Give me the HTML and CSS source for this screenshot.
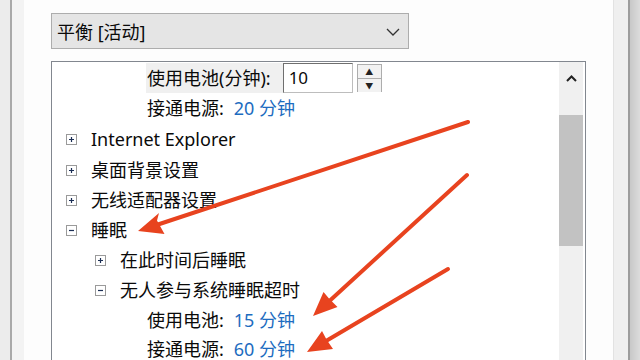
FILE: index.html
```html
<!DOCTYPE html>
<html lang="zh-CN">
<head>
    <meta charset="UTF-8">
    <meta name="viewport" content="width=device-width, initial-scale=1.0">
    <title>电源选项 - 高级设置</title>
    <link rel="stylesheet" href="styles.css">
</head>
<body>

    <div class="window">
        <div class="gutter-left"></div>

        <div class="panel">
            <!-- Plan selector -->
            <div class="plan-select">
                <span>平衡 [活动]</span>
                <svg class="chevron" width="14" height="8" viewBox="0 0 14 8">
                    <polyline points="1,1 7,7 13,1" fill="none" stroke="#333" stroke-width="1.3"/>
                </svg>
            </div>

            <!-- Settings tree -->
            <div class="settings-box">
                <div class="tree">
                    <div class="row row-first leaf">
                        <span class="edit-label">使用电池(分钟):</span>
                        <span class="spin-input">10</span>
                        <span class="spin-buttons">
                            <span class="spin-btn">&#9650;</span>
                            <span class="spin-btn">&#9660;</span>
                        </span>
                    </div>
                    <div class="row leaf">
                        接通电源:<span class="value">20 分钟</span>
                    </div>
                    <div class="row row-tall level-0">
                        <svg class="toggle" width="11" height="11" viewBox="0 0 11 11"><rect x="0.5" y="0.5" width="10" height="10" fill="#fff" stroke="#9a9a9a"/><path d="M3 5.5h5M5.5 3v5" stroke="#1c2f55" stroke-width="1.2"/></svg>
                        <span class="label">Internet Explorer</span>
                    </div>
                    <div class="row level-0">
                        <svg class="toggle" width="11" height="11" viewBox="0 0 11 11"><rect x="0.5" y="0.5" width="10" height="10" fill="#fff" stroke="#9a9a9a"/><path d="M3 5.5h5M5.5 3v5" stroke="#1c2f55" stroke-width="1.2"/></svg>
                        <span class="label">桌面背景设置</span>
                    </div>
                    <div class="row level-0">
                        <svg class="toggle" width="11" height="11" viewBox="0 0 11 11"><rect x="0.5" y="0.5" width="10" height="10" fill="#fff" stroke="#9a9a9a"/><path d="M3 5.5h5M5.5 3v5" stroke="#1c2f55" stroke-width="1.2"/></svg>
                        <span class="label">无线适配器设置</span>
                    </div>
                    <div class="row level-0">
                        <svg class="toggle" width="11" height="11" viewBox="0 0 11 11"><rect x="0.5" y="0.5" width="10" height="10" fill="#fff" stroke="#9a9a9a"/><path d="M3 5.5h5" stroke="#1c2f55" stroke-width="1.2"/></svg>
                        <span class="label">睡眠</span>
                    </div>
                    <div class="row level-1">
                        <svg class="toggle" width="11" height="11" viewBox="0 0 11 11"><rect x="0.5" y="0.5" width="10" height="10" fill="#fff" stroke="#9a9a9a"/><path d="M3 5.5h5M5.5 3v5" stroke="#1c2f55" stroke-width="1.2"/></svg>
                        <span class="label">在此时间后睡眠</span>
                    </div>
                    <div class="row level-1">
                        <svg class="toggle" width="11" height="11" viewBox="0 0 11 11"><rect x="0.5" y="0.5" width="10" height="10" fill="#fff" stroke="#9a9a9a"/><path d="M3 5.5h5" stroke="#1c2f55" stroke-width="1.2"/></svg>
                        <span class="label">无人参与系统睡眠超时</span>
                    </div>
                    <div class="row leaf">
                        使用电池:<span class="value">15 分钟</span>
                    </div>
                    <div class="row row-last leaf">
                        接通电源:<span class="value">60 分钟</span>
                    </div>
                </div>

                <div class="scrollbar">
                    <div class="scroll-btn">
                        <svg width="11" height="7" viewBox="0 0 11 7">
                            <polyline points="1,6 5.5,1.5 10,6" fill="none" stroke="#222" stroke-width="2"/>
                        </svg>
                    </div>
                    <div class="scroll-thumb"></div>
                </div>
            </div>
        </div>

        <div class="gutter-right"></div>
    </div>

    <!-- Red annotation arrows drawn over the screenshot -->
    <svg class="annotations" width="640" height="360" viewBox="0 0 640 360">
        <g stroke="#e8431f" stroke-width="4" stroke-linecap="round" fill="none">
            <line x1="468" y1="122" x2="158" y2="224.5"/>
            <line x1="467" y1="175" x2="330" y2="300.5"/>
            <line x1="448" y1="269" x2="326" y2="341"/>
        </g>
        <g fill="#e8431f">
            <polygon points="138,231 164.5,234 157,220.5 159,213"/>
            <polygon points="313,316 337.5,307 329,298.5 323.5,292"/>
            <polygon points="307,352 333,349 326.5,339.5 322,331"/>
        </g>
    </svg>

</body>
</html>
```

FILE: styles.css
```css
html, body {
    margin: 0;
    height: 360px;
    overflow: hidden;
}
body {
    position: relative;
    font-family: "Noto Sans", "Noto Sans CJK SC", sans-serif;
    color: #0a0a0a;
    background: #fdfdfd;
}
.window {
    display: flex;
    height: 360px;
}
.gutter-left {
    width: 24px;
    background: linear-gradient(to right, #ececec 0 10px, #a9a9a9 10px 12px, #f3f3f3 12px);
}
.gutter-right {
    width: 27px;
    background: linear-gradient(to right, #e2e2e2 0 1px, #efefef 1px 15px, #9c9c9c 15px 17px, #c8c8c8 17px, #dcdcdc);
}
.panel {
    flex: 1;
    background: #fdfdfd;
    padding: 13px 27px 0;
}
.plan-select {
    box-sizing: border-box;
    width: 358px;
    height: 36px;
    border: 1px solid #adadad;
    background: #e5e5e5;
    display: flex;
    align-items: center;
    justify-content: space-between;
    padding: 0 8px 0 5px;
    font-size: 18px;
}
.chevron {
    margin-top: 1px;
}
.settings-box {
    margin-top: 12px;
    height: 298px;
    overflow: hidden;
    border: 1px solid #82878f;
    border-bottom: none;
    display: flex;
    background: #fff;
}
.tree {
    flex: 1;
    font-size: 18px;
    line-height: 18px;
}
.row {
    height: 30px;
    display: flex;
    align-items: center;
    white-space: nowrap;
}
.row-first {
    height: 31px;
}
.row-tall {
    height: 32px;
}
.row-last {
    height: 28px;
}
.level-0 {
    padding-left: 14px;
}
.level-1 {
    padding-left: 43px;
}
.leaf {
    padding-left: 95px;
}
.toggle {
    flex: none;
    margin-right: 14px;
}
.value {
    color: #1d6cc0;
    margin-left: 10px;
}
.edit-label {
    background: #f0f0f0;
    height: 30px;
    line-height: 30px;
    padding: 0 12px 0 1px;
    margin-left: -1px;
}
.spin-input {
    box-sizing: border-box;
    width: 70px;
    height: 30px;
    border: 1px solid #8c8c8c;
    border-color: #6f6f6f #bdbdbd #bdbdbd #6f6f6f;
    background: #fff;
    font-size: 17px;
    line-height: 28px;
    padding-left: 5px;
}
.spin-buttons {
    margin-left: 4px;
    width: 25px;
    height: 28px;
    display: flex;
    flex-direction: column;
    border: 1px solid #adadad;
    box-sizing: border-box;
}
.spin-btn {
    flex: 1;
    font-size: 8px;
    line-height: 13px;
    text-align: center;
    color: #222;
    background: #f2f2f2;
}
.spin-btn + .spin-btn {
    border-top: 1px solid #adadad;
}
.scrollbar {
    width: 24px;
    margin-right: 2px;
    background: #f0f0f0;
    display: flex;
    flex-direction: column;
}
.scroll-btn {
    height: 33px;
    display: flex;
    align-items: center;
    justify-content: center;
}
.scroll-thumb {
    margin-top: 20px;
    height: 131px;
    background: #c2c2c2;
}
.annotations {
    position: absolute;
    left: 0;
    top: 0;
    pointer-events: none;
}
```
